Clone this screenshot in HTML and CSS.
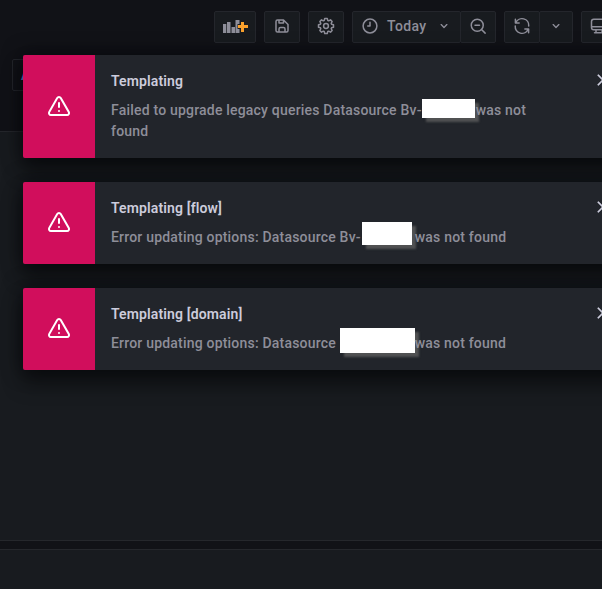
FILE: index.html
```html
<!DOCTYPE html>
<html lang="en">
<head>
<meta charset="utf-8">
<title>Dashboard</title>
<link rel="stylesheet" href="styles.css">
</head>
<body>
<svg width="0" height="0" class="defs">
  <symbol id="warning" viewBox="0 0 24 24"><path d="M12 16a1 1 0 1 0 1 1 1 1 0 0 0-1-1Zm10.67 1.47-8.05-14a3 3 0 0 0-5.24 0l-8 14A3 3 0 0 0 3.94 22h16.12a3 3 0 0 0 2.61-4.53Zm-1.73 2a1 1 0 0 1-.88.51H3.94a1 1 0 0 1-.88-.51 1 1 0 0 1 0-1l8-14a1 1 0 0 1 1.78 0l8.05 14a1 1 0 0 1 .05 1.02ZM12 8a1 1 0 0 0-1 1v4a1 1 0 0 0 2 0V9a1 1 0 0 0-1-1Z"/></symbol>
  <symbol id="close" viewBox="0 0 24 24"><path d="m13.41 12 6.3-6.29a1 1 0 1 0-1.42-1.42L12 10.59l-6.29-6.3a1 1 0 0 0-1.42 1.42l6.3 6.29-6.3 6.29a1 1 0 1 0 1.42 1.42l6.29-6.3 6.29 6.3a1 1 0 0 0 1.42-1.42Z"/></symbol>
  <symbol id="angle" viewBox="0 0 24 24"><path d="M17 9.17a1 1 0 0 0-1.41 0L12 12.71 8.46 9.17a1 1 0 0 0-1.41 1.42l4.24 4.24a1 1 0 0 0 1.42 0L17 10.59a1 1 0 0 0 0-1.42Z"/></symbol>
</svg>
<div class="page">
  <header class="toolbar">
    <button class="btn add"><svg width="25" height="16" viewBox="0 0 25 16"><path d="M0 6h3.300v9H0zM4 4h3.500v11H4zM8.500 9h3.500v6H8.500zM12.500 2h4v4h-2v5h2v4h-4z"/><path class="plus" d="M18 4h3v3h4v3h-4v4h-3v-4h-3V7h3z"/></svg></button>
    <button class="btn"><svg width="18" height="18" viewBox="0 0 24 24"><path d="m20.71 9.29-6-6A1 1 0 0 0 14 3H6a3 3 0 0 0-3 3v12a3 3 0 0 0 3 3h12a3 3 0 0 0 3-3v-8a1 1 0 0 0-.29-.71ZM9 5h4v2H9Zm6 14H9v-3a1 1 0 0 1 1-1h4a1 1 0 0 1 1 1Zm4-1a1 1 0 0 1-1 1h-1v-3a3 3 0 0 0-3-3h-4a3 3 0 0 0-3 3v3H6a1 1 0 0 1-1-1V6a1 1 0 0 1 1-1h1v3a1 1 0 0 0 1 1h6a1 1 0 0 0 1-1V6.410l4 4Z"/></svg></button>
    <button class="btn"><svg width="18" height="18" viewBox="0 0 24 24"><path class="line" d="m10.300 2-.7 2.600-1.200.5L6 3.800 3.800 6l1.300 2.400-.5 1.200-2.600.7v3.400l2.600.7.5 1.200L3.800 18 6 20.200l2.400-1.300 1.200.5.7 2.600h3.400l.7-2.600 1.200-.5 2.400 1.300 2.200-2.200-1.300-2.400.5-1.200 2.600-.7v-3.400l-2.600-.7-.5-1.200L20.200 6 18 3.800l-2.400 1.300-1.200-.5-.7-2.600Z"/><circle class="line" cx="12" cy="12" r="3.200"/></svg></button>
    <div class="group">
      <button class="btn time"><svg width="18" height="18" viewBox="0 0 24 24"><circle class="line" cx="12" cy="12" r="9.2"/><path class="line" d="M12 7v5H9"/></svg><span>Today</span><svg class="angle" width="16" height="16"><use href="#angle"/></svg></button>
      <button class="btn"><svg width="18" height="18" viewBox="0 0 24 24"><circle class="line" cx="11" cy="11" r="8"/><path class="line" d="M8 11h6M17 17l4.500 4.500"/></svg></button>
    </div>
    <div class="group">
      <button class="btn"><svg width="18" height="18" viewBox="0 0 24 24"><path class="line" d="M3.200 3v5h5M3.800 7.600A9 9 0 0 1 21 12M20.800 21v-5h-5M20.200 16.400A9 9 0 0 1 3 12"/></svg></button>
      <button class="btn narrow"><svg width="16" height="16"><use href="#angle"/></svg></button>
    </div>
    <button class="btn monitor"><svg width="18" height="18" viewBox="0 0 24 24"><path class="line" d="M5 3h14a3 3 0 0 1 3 3v8a3 3 0 0 1-3 3H5a3 3 0 0 1-3-3V6a3 3 0 0 1 3-3ZM2 13h20M8 17v4M16 17v4M6 21h12"/></svg></button>
  </header>
  <div class="variables"><div class="variable">A</div></div>
  <section class="panel"></section>
  <section class="panel next"></section>
</div>
<div class="alerts">
  <article class="alert">
    <div class="badge"><svg width="24" height="24"><use href="#warning"/></svg></div>
    <div class="body"><h2>Templating</h2><p>Failed to upgrade legacy queries Datasource Bv-<span class="slot first"><i></i></span>was not<br>found</p></div>
    <svg class="close" width="16" height="16"><use href="#close"/></svg>
  </article>
  <article class="alert">
    <div class="badge"><svg width="24" height="24"><use href="#warning"/></svg></div>
    <div class="body"><h2>Templating [flow]</h2><p>Error updating options: Datasource Bv-<span class="slot second"><i></i></span>was not found</p></div>
    <svg class="close" width="16" height="16"><use href="#close"/></svg>
  </article>
  <article class="alert">
    <div class="badge"><svg width="24" height="24"><use href="#warning"/></svg></div>
    <div class="body"><h2>Templating [domain]</h2><p>Error updating options: Datasource <span class="slot third"><i></i></span>was not found</p></div>
    <svg class="close" width="16" height="16"><use href="#close"/></svg>
  </article>
</div>
</body>
</html>
```
FILE: styles.css
```css
* { box-sizing: border-box; }
body {
  margin: 0;
  height: 589px;
  overflow: hidden;
  position: relative;
  background: #111217;
  color: #8e8e99;
  font: 500 14px/21px Roboto, sans-serif;
  letter-spacing: 0.15px;
}
svg { display: block; flex: none; fill: currentColor; }
.defs { position: absolute; }
.line { fill: none; stroke: currentColor; stroke-width: 2; stroke-linecap: round; stroke-linejoin: round; }
.page { display: flex; flex-direction: column; height: 589px; }
.toolbar { display: flex; gap: 8px; padding: 11px 0 0 214px; height: 59px; flex: none; }
.btn {
  display: flex;
  align-items: center;
  justify-content: center;
  flex: none;
  width: 36px;
  height: 32px;
  padding: 0 0 2px;
  border: 1px solid #24262c;
  border-radius: 2px;
  background: #181b1f;
  color: #8e8e99;
  font: inherit;
  letter-spacing: inherit;
}
.add { width: 42px; }
.plus { fill: #f9a02c; }
.group { display: flex; flex: none; }
.group .btn + .btn { margin-left: -1px; }
.time { width: 109px; justify-content: flex-start; padding-left: 8px; }
.time span { margin-left: 8px; letter-spacing: 0.35px; }
.time .angle { margin-left: 10px; }
.narrow { width: 34px; }
.monitor { width: 36px; }
.variables { height: 72px; flex: none; padding-left: 12px; }
.variable {
  width: 80px;
  height: 32px;
  padding: 5px 8px;
  border: 1px solid #24262c;
  border-radius: 2px;
  background: #111217;
  color: #6e9fff;
}
.panel { flex: none; height: 410px; background: #181b1f; border: solid #25272c; border-width: 1px 0; }
.next { margin-top: 8px; height: 60px; }
.alerts {
  position: absolute;
  top: 55px;
  left: 23px;
  width: 600px;
  display: flex;
  flex-direction: column;
  gap: 24px;
}
.alert {
  display: flex;
  border-radius: 2px;
  background: #22252b;
  box-shadow: 0 13px 20px 1px rgba(0, 0, 0, .4), 0 0 20px rgba(1, 4, 9, .65);
}
.badge {
  display: flex;
  align-items: center;
  justify-content: center;
  width: 72px;
  padding-bottom: 2px;
  border-radius: 2px 0 0 2px;
  background: #d10e5c;
  color: #fff;
}
.body { flex: 1; isolation: isolate; padding: 16px 0 16px 16px; white-space: nowrap; }
h2 { margin: 0 0 8px; font: inherit; font-weight: 600; letter-spacing: 0.13px; color: #ccccdc; }
p { margin: 0; letter-spacing: 0.2px; }
.close { margin: 17px 12px 0 0; color: #ccccdc; stroke: #ccccdc; stroke-width: .6; }
.slot { position: relative; display: inline-block; height: 21px; vertical-align: top; }
.slot i { position: absolute; z-index: -1; background: #fff; box-shadow: 4px 4px 2px #505152; }
.first { width: 54px; }
.first i { left: 0; top: -1px; width: 53px; height: 19px; }
.second { width: 54px; }
.second i { left: 1px; top: -5px; width: 50px; height: 23px; }
.third { width: 75px; }
.third i { left: 0; top: -5px; width: 75px; height: 25px; }
```
